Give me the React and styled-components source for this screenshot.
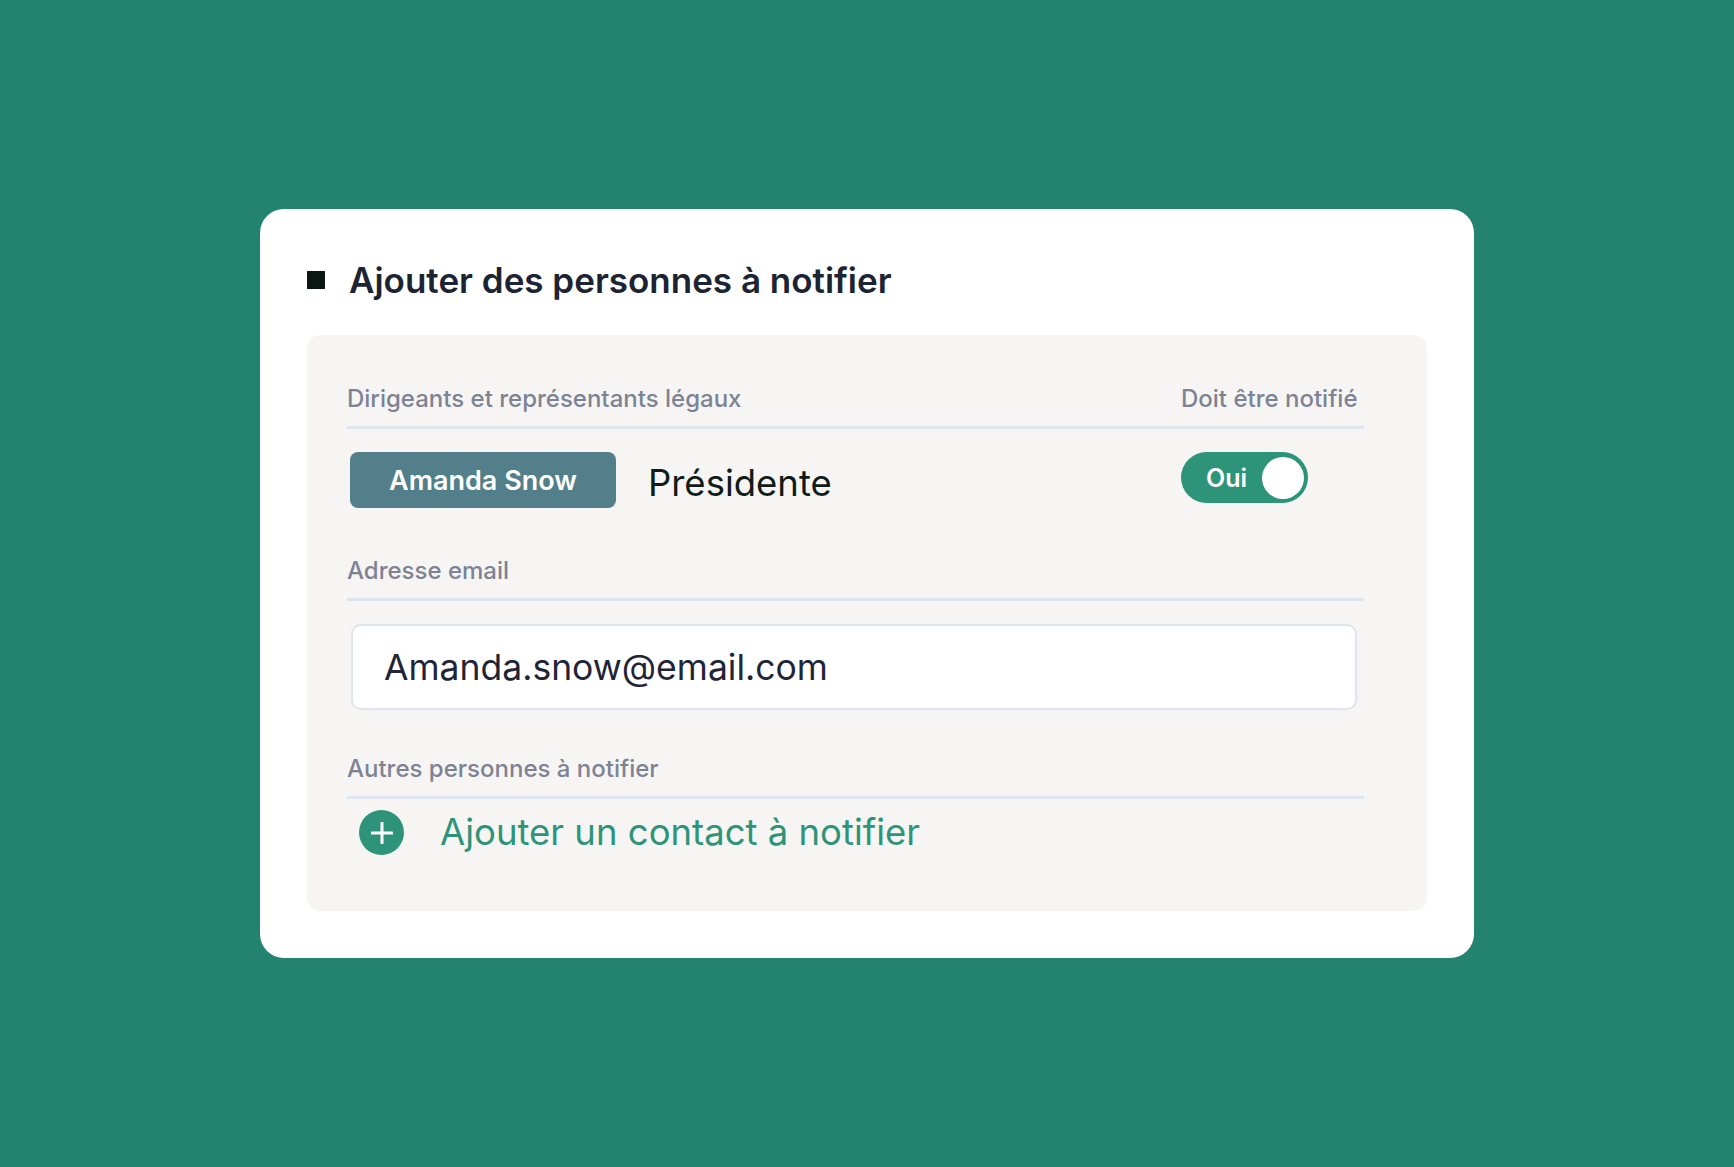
import React from 'react';
import styled, { createGlobalStyle } from 'styled-components';

const GlobalStyle = createGlobalStyle`
  html, body {
    margin: 0;
    height: 100%;
  }
  body {
    background: #23836e;
    font-family: Inter, "Noto Sans", sans-serif;
  }
  #root {
    height: 100%;
  }
`;

const Page = styled.div`
  min-height: 100vh;
  display: flex;
  align-items: center;
  justify-content: center;
`;

const Card = styled.div`
  width: 1214px;
  box-sizing: border-box;
  background: #ffffff;
  border-radius: 24px;
  padding: 46px 47px 47px;
`;

const TitleRow = styled.div`
  display: flex;
  align-items: center;
  gap: 24px;
  height: 50px;
  margin-bottom: 30px;
`;

const Bullet = styled.span`
  width: 18px;
  height: 18px;
  background: #0c1612;
`;

const Title = styled.h2`
  margin: 0;
  font-size: 35px;
  line-height: 50px;
  font-weight: 600;
  color: #1c2434;
`;

const Panel = styled.div`
  background: #f6f5f3;
  border-radius: 14px;
  padding: 50px 63px 56px 40px;
  display: flex;
  flex-direction: column;
  gap: 45px;
`;

const Section = styled.section`
  display: flex;
  flex-direction: column;
`;

const SectionHeader = styled.div`
  display: grid;
  grid-template-columns: 1fr 183px;
  padding-bottom: 13px;
  border-bottom: 3px solid #dfe5ed;
  font-size: 24px;
  line-height: 28px;
  font-weight: 500;
  color: #7d8393;
`;

const Row = styled.div`
  display: grid;
  grid-template-columns: 1fr 183px;
  align-items: center;
  margin-top: 23px;
  padding-bottom: 4px;
`;

const Person = styled.div`
  display: flex;
  align-items: center;
  gap: 32px;
  padding-left: 3px;
`;

const NameBadge = styled.span`
  height: 56px;
  padding: 0 39px;
  display: flex;
  align-items: center;
  background: #527f89;
  color: #ffffff;
  border-radius: 8px;
  font-size: 27px;
  font-weight: 600;
`;

const Role = styled.span`
  font-size: 36.5px;
  line-height: 50px;
  padding-top: 6px;
  font-weight: 400;
  color: #0f1b18;
`;

const Toggle = styled.div`
  align-self: start;
  width: 127px;
  height: 51px;
  box-sizing: border-box;
  border-radius: 26px;
  background: #2e9479;
  display: flex;
  align-items: center;
  justify-content: space-between;
  padding: 0 4px 0 25px;
`;

const ToggleLabel = styled.span`
  font-size: 25px;
  font-weight: 600;
  color: #ffffff;
`;

const Knob = styled.span`
  width: 42px;
  height: 42px;
  border-radius: 50%;
  background: #ffffff;
`;

const EmailInput = styled.input`
  margin: 23px 7px 0 4px;
  height: 86px;
  box-sizing: border-box;
  border: 2px solid #dfe5ee;
  border-radius: 10px;
  padding: 0 31px;
  background: #ffffff;
  font-family: Inter, "Noto Sans", sans-serif;
  font-size: 35.5px;
  font-weight: 400;
  color: #1f2536;
  outline: none;
`;

const AddRow = styled.button`
  margin-top: 11px;
  height: 45px;
  display: flex;
  align-items: center;
  gap: 36px;
  padding: 0 0 0 12px;
  border: none;
  background: none;
  cursor: pointer;
  font-family: inherit;
`;

const AddIcon = styled.span`
  width: 45px;
  height: 45px;
  border-radius: 50%;
  background: #2e9479;
  display: flex;
  align-items: center;
  justify-content: center;
`;

const AddText = styled.span`
  font-size: 36.5px;
  line-height: 45px;
  font-weight: 400;
  color: #2e9479;
`;

export default function App() {
  return (
    <Page>
      <GlobalStyle />
      <Card>
        <TitleRow>
          <Bullet />
          <Title>Ajouter des personnes à notifier</Title>
        </TitleRow>
        <Panel>
          <Section>
            <SectionHeader>
              <span>Dirigeants et représentants légaux</span>
              <span>Doit être notifié</span>
            </SectionHeader>
            <Row>
              <Person>
                <NameBadge>Amanda Snow</NameBadge>
                <Role>Présidente</Role>
              </Person>
              <Toggle>
                <ToggleLabel>Oui</ToggleLabel>
                <Knob />
              </Toggle>
            </Row>
          </Section>
          <Section>
            <SectionHeader>
              <span>Adresse email</span>
            </SectionHeader>
            <EmailInput type="email" defaultValue="Amanda.snow@email.com" />
          </Section>
          <Section>
            <SectionHeader>
              <span>Autres personnes à notifier</span>
            </SectionHeader>
            <AddRow type="button">
              <AddIcon>
                <svg width="22" height="22" viewBox="0 0 22 22" fill="none">
                  <path d="M11 1v20M1 11h20" stroke="#ffffff" strokeWidth="3" strokeLinecap="round" />
                </svg>
              </AddIcon>
              <AddText>Ajouter un contact à notifier</AddText>
            </AddRow>
          </Section>
        </Panel>
      </Card>
    </Page>
  );
}
